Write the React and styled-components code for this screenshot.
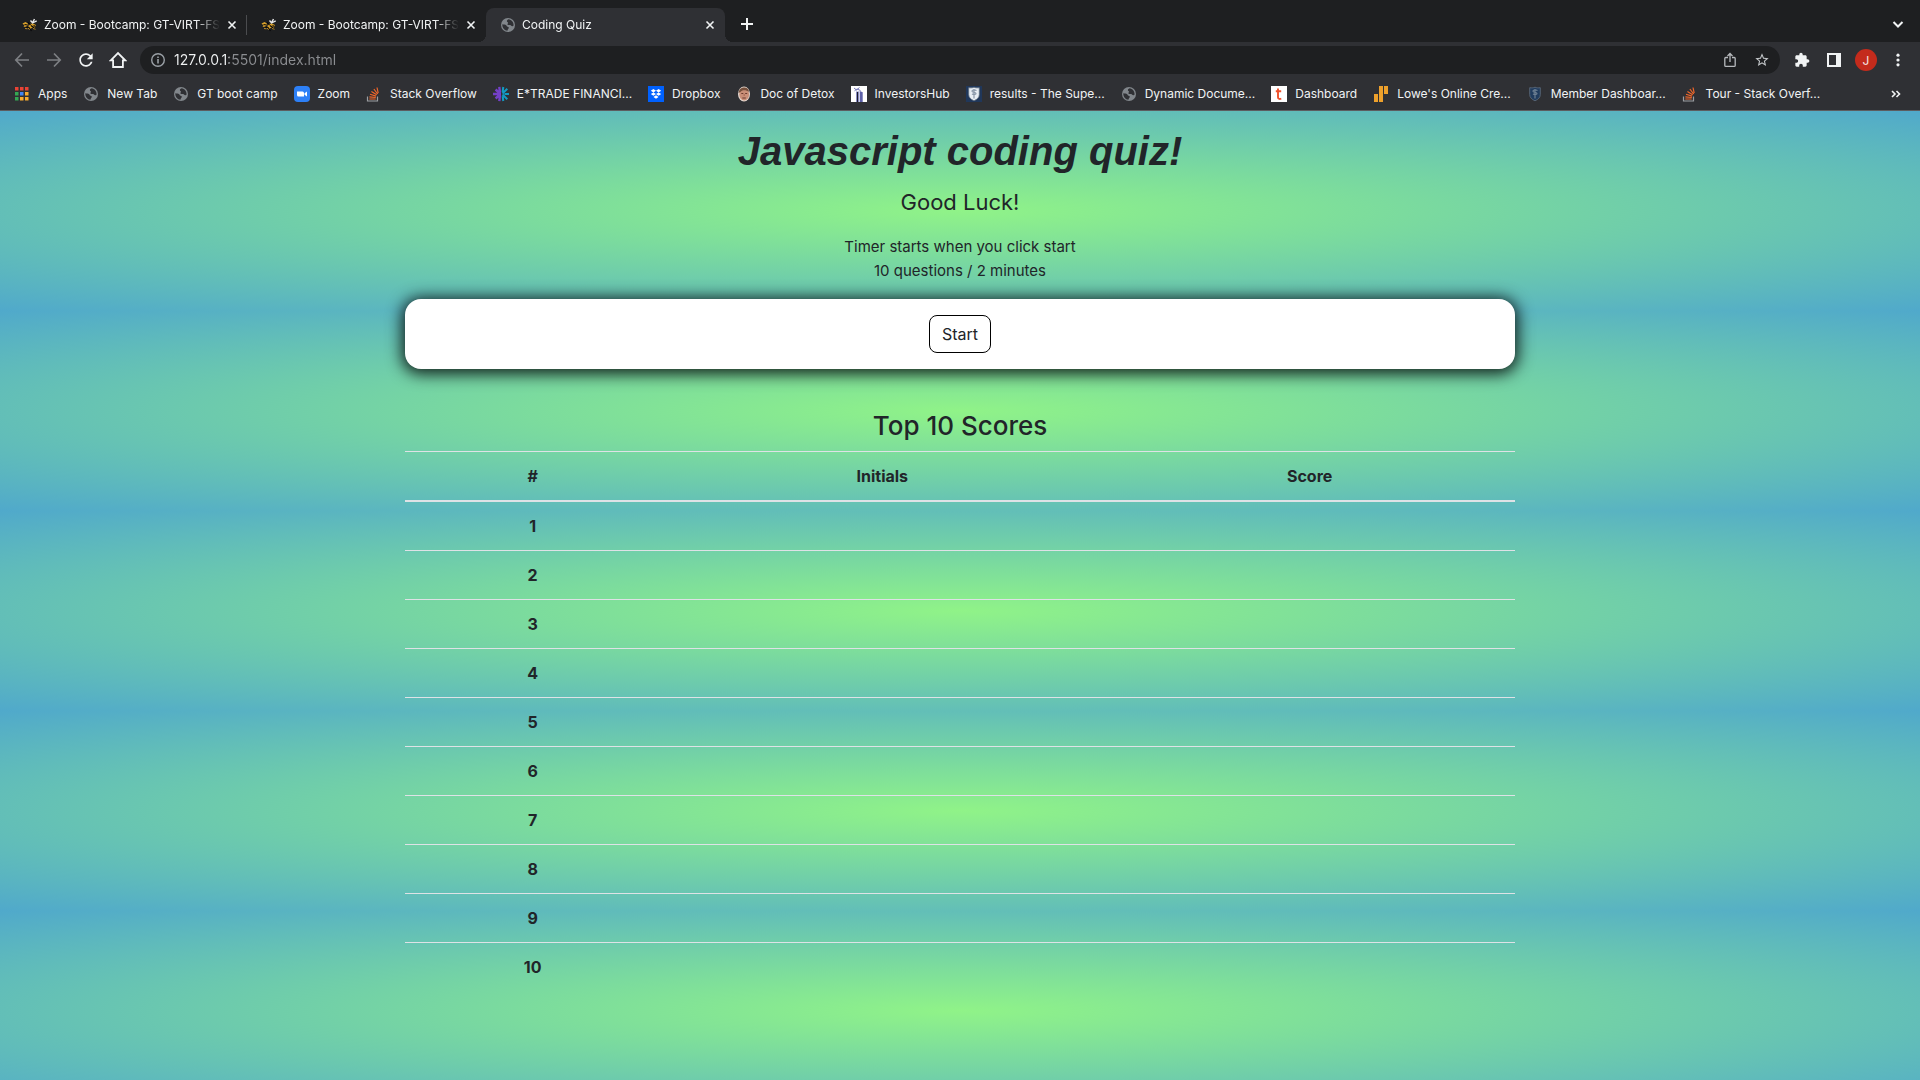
import React from "react";
import styled, { createGlobalStyle } from "styled-components";

const uiFont = `Inter, "Liberation Sans", sans-serif`;

const GlobalStyle = createGlobalStyle`
  *, *::before, *::after { box-sizing: border-box; }
  body { margin: 0; font-family: ${uiFont}; color: #212529; background: #1e1f21; }
  button { font: inherit; color: inherit; }
`;

const Screen = styled.div`
  min-height: 100vh;
  display: flex;
  flex-direction: column;
`;

const Chrome = styled.header`
  background: #2f3034;
  color: #f1f3f4;
  border-bottom: 1px solid #5c5d60;
  font-size: 12px;
`;

/* ---------- tab strip ---------- */

const TabStrip = styled.div`
  display: flex;
  height: 42px;
  padding: 8px 10px 0 8px;
  background: #1e1f21;
`;

const Tab = styled.div`
  position: relative;
  display: flex;
  align-items: center;
  width: 239px;
  height: 34px;
  padding: 0 9px 0 14px;
  gap: 6px;
  border-radius: 8px 8px 0 0;
  background: ${(p) => (p.$active ? "#2f3034" : "transparent")};

  ${(p) =>
    p.$active &&
    `&::before, &::after {
      content: "";
      position: absolute;
      bottom: 0;
      width: 8px;
      height: 8px;
    }
    &::before { right: 100%; background: radial-gradient(circle at 0 0, transparent 8px, #2f3034 8px); }
    &::after { left: 100%; background: radial-gradient(circle at 100% 0, transparent 8px, #2f3034 8px); }`}
`;

const TabDivider = styled.span`
  position: absolute;
  right: 0;
  top: 7px;
  width: 1px;
  height: 20px;
  background: #4b4c4f;
`;

const TabTitle = styled.span`
  flex: 1;
  min-width: 0;
  overflow: hidden;
  white-space: nowrap;
  line-height: 16px;
  mask-image: linear-gradient(to right, #000 calc(100% - 24px), transparent 100%);
`;

const IconButton = styled.button`
  display: grid;
  place-items: center;
  place-content: center;
  flex: none;
  width: ${(p) => p.$size || 32}px;
  height: ${(p) => p.$size || 32}px;
  padding: 0;
  border: 0;
  background: none;
  color: ${(p) => p.$color || "#f1f3f4"};
`;

const NewTab = styled(IconButton)`
  margin-left: 6px;
`;

const TabSearch = styled(IconButton)`
  margin-left: auto;
  width: 24px;
`;

/* ---------- toolbar ---------- */

const Toolbar = styled.div`
  display: flex;
  align-items: center;
  height: 36px;
  padding: 0 6px;
`;

const AddressBar = styled.div`
  flex: 1;
  display: flex;
  align-items: center;
  height: 28px;
  margin: 0 6px;
  padding: 0 2px 0 10px;
  border-radius: 14px;
  background: #1e1f21;
`;

const AddressInput = styled.input`
  flex: 1;
  min-width: 0;
  height: 28px;
  margin-left: 8px;
  padding: 0;
  border: 0;
  outline: 0;
  font: 14px/28px ${uiFont};
  color: #f1f3f4;
  -webkit-text-fill-color: transparent;
  background: linear-gradient(to right, #f1f3f4 55px, #8b8d91 55px);
  background-clip: text;
  -webkit-background-clip: text;
`;

const Avatar = styled.span`
  display: grid;
  place-items: center;
  width: 22px;
  height: 22px;
  border-radius: 50%;
  background: #c42b1c;
  color: #f6e3e0;
  font-size: 12px;
`;

/* ---------- bookmarks ---------- */

const Bookmarks = styled.nav`
  display: flex;
  align-items: center;
  height: 32px;
  padding: 0 12px 0 14px;
  gap: 16px;
`;

const Bookmark = styled.a`
  display: flex;
  align-items: center;
  gap: 8px;
  color: inherit;
  text-decoration: none;
  white-space: nowrap;
  line-height: 16px;
`;

const MoreBookmarks = styled(IconButton)`
  margin-left: auto;
`;

/* ---------- quiz page ---------- */

const Site = styled.main`
  flex: 1;
  padding: 16px 0 40px;
  text-align: center;
  background: radial-gradient(#90f388, #50a9cb) 0 0 / 100% 200px repeat;
`;

const Container = styled.div`
  max-width: 1140px;
  margin: 0 auto;
  padding: 0 15px;
  font-size: 16px;
  line-height: 24px;
`;

const Title = styled.h1`
  margin: 0 0 8px;
  font: italic bold 40px/48px "Liberation Sans", Arial, sans-serif;
`;

const Lead = styled.p`
  margin: 0 0 14px;
  font-size: 22px;
  line-height: 38px;
`;

const Note = styled.p`
  margin: 0 0 16px;
  font-size: 15px;
`;

const Card = styled.section`
  padding: 16px;
  border-radius: 16px;
  background: #fff;
  box-shadow: 0 2px 16px 3px rgba(0, 0, 0, 0.85);
  display: flex;
  justify-content: center;
`;

const StartButton = styled.button`
  height: 38px;
  padding: 0 12px;
  border: 1px solid #000;
  border-radius: 8px;
  background: #fff;
`;

const ScoresTitle = styled.h2`
  margin: 40px 0 8px;
  font-size: 26px;
  line-height: 34px;
  font-weight: 500;
`;

const Scores = styled.table`
  width: 100%;
  border-spacing: 0;

  th, td { padding: 12px; }
  th { font-weight: 700; }
  thead th { border-top: 1px solid #dee2e6; border-bottom: 2px solid #dee2e6; }
  thead th:nth-child(1) { width: 23%; }
  thead th:nth-child(2) { width: 40%; }
  tbody tr + tr > * { border-top: 1px solid #dee2e6; }
`;

/* ---------- icons ---------- */

const Svg = ({ s = 16, v = "0 0 24 24", children }) => (
  <svg width={s} height={s} viewBox={v} fill="currentColor" aria-hidden="true">
    {children}
  </svg>
);

const Close = () => (
  <Svg s={16} v="0 0 16 16">
    <path d="M4.5 4.5l7 7m0-7l-7 7" stroke="currentColor" strokeWidth="1.6" />
  </Svg>
);
const Plus = () => (
  <Svg s={16} v="0 0 16 16">
    <path d="M8 2v12M2 8h12" stroke="currentColor" strokeWidth="2" />
  </Svg>
);
const Chevron = () => (
  <Svg s={16} v="0 0 16 16">
    <path d="M3.5 6L8 10.5 12.5 6" fill="none" stroke="currentColor" strokeWidth="2" />
  </Svg>
);
const Back = () => (
  <Svg s={16} v="0 0 16 16">
    <path d="M15 8H2.5M8 1.5L1.8 8 8 14.5" fill="none" stroke="currentColor" strokeWidth="1.7" />
  </Svg>
);
const Forward = () => (
  <Svg s={16} v="0 0 16 16">
    <path d="M1 8h12.5M8 1.5L14.2 8 8 14.5" fill="none" stroke="currentColor" strokeWidth="1.7" />
  </Svg>
);
const Reload = () => (
  <Svg s={20}>
    <path d="M17.65 6.35C16.2 4.9 14.21 4 12 4c-4.42 0-7.99 3.58-7.99 8s3.57 8 7.99 8c3.73 0 6.84-2.55 7.73-6h-2.08c-.82 2.33-3.04 4-5.65 4-3.31 0-6-2.69-6-6s2.69-6 6-6c1.66 0 3.14.69 4.22 1.78L13 11h7V4l-2.35 2.35z" />
  </Svg>
);
const Home = () => (
  <Svg s={18} v="0 0 18 18">
    <path d="M1.8 9.3L9 2l7.2 7.3H13.9V16H4.1V9.3z" fill="none" stroke="currentColor" strokeWidth="1.8" />
  </Svg>
);
const Info = () => (
  <Svg s={16} v="0 0 16 16">
    <circle cx="8" cy="8" r="6.3" fill="none" stroke="#9aa0a6" strokeWidth="1.4" />
    <path d="M7.2 7h1.6v4.4H7.2zM7.2 4.4h1.6V6H7.2z" fill="#9aa0a6" />
  </Svg>
);
const Share = () => (
  <Svg s={16} v="0 0 16 16">
    <path d="M6 5.5H3.8a1 1 0 0 0-1 1v6.9a1 1 0 0 0 1 1h8.4a1 1 0 0 0 1-1V6.5a1 1 0 0 0-1-1H10M8 10V1.5M5.5 4L8 1.5 10.5 4" fill="none" stroke="currentColor" strokeWidth="1.3" />
  </Svg>
);
const Star = () => (
  <Svg s={16}>
    <path d="M22 9.24l-7.19-.62L12 2 9.19 8.63 2 9.24l5.46 4.73L5.82 21 12 17.27 18.18 21l-1.63-7.03L22 9.24zM12 15.4l-3.76 2.27 1-4.28-3.32-2.88 4.38-.38L12 6.1l1.71 4.04 4.38.38-3.32 2.88 1 4.28L12 15.4z" />
  </Svg>
);
const Puzzle = () => (
  <Svg s={16}>
    <path d="M20.5 11H19V7c0-1.1-.9-2-2-2h-4V3.5C13 2.12 11.88 1 10.5 1S8 2.12 8 3.5V5H4c-1.1 0-1.99.9-1.99 2v3.8H3.5c1.49 0 2.7 1.21 2.7 2.7s-1.21 2.7-2.7 2.7H2V20c0 1.1.9 2 2 2h3.8v-1.5c0-1.49 1.21-2.7 2.7-2.7 1.49 0 2.7 1.21 2.7 2.7V22H17c1.1 0 2-.9 2-2v-4h1.5c1.38 0 2.5-1.12 2.5-2.5S21.88 11 20.5 11z" />
  </Svg>
);
const SidePanel = () => (
  <Svg s={14} v="0 0 14 14">
    <path d="M0 0h14v14H0zM2 2v10h7V2z" fillRule="evenodd" />
  </Svg>
);
const Dots = () => (
  <Svg s={16} v="0 0 16 16">
    <circle cx="8" cy="3.2" r="1.6" />
    <circle cx="8" cy="8" r="1.6" />
    <circle cx="8" cy="12.8" r="1.6" />
  </Svg>
);
const More = () => (
  <Svg s={12} v="0 0 12 12">
    <path d="M2 3l3 3-3 3M6.5 3l3 3-3 3" fill="none" stroke="currentColor" strokeWidth="1.6" />
  </Svg>
);

const Globe = () => (
  <Svg v="0 0 16 16">
    <circle cx="8" cy="8" r="7" fill="#81868b" />
    <path d="M2.3 7.2c1.6.2 3 .2 3.9 1 .7.6.5 1.4 1.4 1.6.9.1 1.3.5 1.2 1.3-.2 1-1 1.1-1.4 2.6-2.9-.2-5.3-2.900-5.1-6.5z" fill="#2f3034" />
    <path d="M8.500 2.3c-.8.5-1.7 1-1.6 1.9.1.8 1 .8 1.1 1.6.1.8-.9.9-.6 1.7.3.7 1.6.3 2.6.4 1.2.1 1.3 1.2 2.2 1.3.6.1 1-.2 1.4-.7.1-3.3-2-5.8-5.1-6.2z" fill="#2f3034" />
  </Svg>
);
const Bee = () => (
  <Svg v="0 0 16 16">
    <path d="M.5 6.500l3-1.500 2.500 1.5-1 3-3.500.5 1-1.500z" fill="#d9a12b" />
    <path d="M7 7l4-.5 3 1.500-1 2.500-3.500.5-2 2-1.500-1.500z" fill="#d9a12b" />
    <path d="M2.500 7.500l3 .5M4 10l3 .5 2.500 3.500M9 8.500l2.500 2 1 2M6 5.500l2.500 2.500M11.500 8.500l2 1" fill="none" stroke="#08080a" strokeWidth="1.2" />
    <path d="M8.500 3.500l2 2.200L12.500 2M10.500 6l4.200-2.200" fill="none" stroke="#e8e8e8" strokeWidth="1.4" />
    <path d="M3 11.500l2.500.3M11 11.500l2.500.8" stroke="#b98a2a" />
  </Svg>
);
const appColors = ["#ea4335", "#ea4335", "#ea4335", "#34a853", "#4285f4", "#f9ab2e", "#34a853", "#f9ab2e", "#f9ab2e"];
const Apps = () => (
  <Svg v="0 0 16 16">
    {appColors.map((c, i) => (
      <rect key={i} x={1 + (i % 3) * 5} y={1 + Math.floor(i / 3) * 5} width="3.5" height="3.5" fill={c} />
    ))}
  </Svg>
);
const ZoomLogo = () => (
  <Svg v="0 0 16 16">
    <rect width="16" height="16" rx="4" fill="#2d80f7" />
    <path d="M3 5.5h5.5A1.5 1.5 0 0 1 10 7v3.500H4.500A1.500 1.500 0 0 1 3 9zM10.500 7.200L13 5.500v5l-2.500-1.700z" fill="#fff" />
  </Svg>
);
const Stack = () => (
  <Svg v="0 0 16 16">
    <path d="M1.500 10.500v4.500h10v-4.500" fill="none" stroke="#9b9da1" strokeWidth="1.200" />
    <path d="M3.300 13h6.400M3.400 10.800l6.400.7M4 8.200l6.100 1.900M5.400 5.400l5.300 3.400M7.900 3l3.700 5M11 1.500l1.200 5.700" stroke="#f2672a" strokeWidth="1.200" />
  </Svg>
);
const Etrade = () => (
  <Svg v="0 0 16 16">
    <path d="M0 8h8M2.600 3.500L7 7.500M2.600 12.500L7 8.500M6.300 .8L7 7M6.300 15.200L7 9" stroke="#7440c8" strokeWidth="2.400" fill="none" />
    <path d="M16 8h-4.500M14.300 2.800L9.500 7.500M14.300 13.200L9.500 8.500M10.300 1L9.600 6M10.300 15L9.600 10" stroke="#129bc4" strokeWidth="2" fill="none" />
  </Svg>
);
const Dropbox = () => (
  <Svg v="0 0 16 16">
    <rect width="16" height="16" fill="#0061fe" />
    <path d="M5.400 3L8 4.700 5.400 6.400 2.800 4.700zM10.600 3l2.600 1.700-2.600 1.700L8 4.700zM5.400 6.400L8 8.100 5.400 9.800 2.800 8.100zM10.600 6.400l2.600 1.700-2.600 1.700L8 8.100zM8 9.300l2.500 1.700L8 12.700 5.500 11z" fill="#fff" />
  </Svg>
);
const Face = () => (
  <Svg v="0 0 16 16">
    <ellipse cx="8" cy="8" rx="6" ry="7.500" fill="#e5d8d0" />
    <ellipse cx="8.200" cy="8.600" rx="4.900" ry="6" fill="#c98f78" />
    <path d="M2.600 7C3 2.500 6 1.200 9 1.500c2.500.3 4 2.500 4.200 4.500C10 3.500 6 3.500 4.500 6z" fill="#76503c" />
    <path d="M5.300 7.500h2M9.200 7.500h2M6.300 12h3.500" stroke="#6b3b2e" />
    <path d="M8.200 8v2" stroke="#a86854" />
  </Svg>
);
const Investors = () => (
  <Svg v="0 0 16 16">
    <rect width="16" height="16" fill="#fff" />
    <path d="M3 2l2.500 2L8.500 1.500M3.500 4.800L6 3l3.500 1.500" stroke="#7577b8" fill="none" />
    <path d="M5 5.500h3V16H5z" fill="#8a8dc4" />
    <path d="M6.500 6v10" stroke="#1c1c2c" />
    <path d="M8.700 5l3 1.200V16h-3z" fill="#5d60a8" />
  </Svg>
);
const Shield = ({ bg, fill, mark }) => (
  <Svg v="0 0 16 16">
    <rect width="16" height="16" fill={bg} />
    <path d="M8 1.200c1.500.7 3.200.8 5.300.5v6.800c0 3-2 4.800-5.300 6.300-3.300-1.500-5.300-3.300-5.300-6.300V1.700c2.100.3 3.800.2 5.300-.5z" fill={fill} stroke="#5f6f80" strokeWidth=".8" />
    <path d="M10.500 4.500C8 3.500 6 4 6 5.200c0 1.500 4 .8 4 2.300 0 1-2 1.500-4 .5M8 3v9.500" fill="none" stroke={mark} strokeWidth="1.200" />
  </Svg>
);
const Toast = () => (
  <Svg v="0 0 16 16">
    <rect width="16" height="16" fill="#fff" />
    <path d="M7 2.500v8.800c0 1.400 1.200 2 3.300 1.400M4.800 5.300h5.400" fill="none" stroke="#f0522d" strokeWidth="1.900" />
  </Svg>
);
const Bars = () => (
  <Svg v="0 0 16 16">
    <path d="M1 8h4v8H1zM6 0h4v16H6zM11 0h4v8h-4z" fill="#eda02c" />
  </Svg>
);

/* ---------- data ---------- */

const tabs = [
  { title: "Zoom - Bootcamp: GT-VIRT-FS", icon: <Bee />, divider: true },
  { title: "Zoom - Bootcamp: GT-VIRT-FS", icon: <Bee /> },
  { title: "Coding Quiz", icon: <Globe />, active: true },
];

const bookmarks = [
  ["Apps", <Apps />],
  ["New Tab", <Globe />],
  ["GT boot camp", <Globe />],
  ["Zoom", <ZoomLogo />],
  ["Stack Overflow", <Stack />],
  ["E*TRADE FINANCI...", <Etrade />],
  ["Dropbox", <Dropbox />],
  ["Doc of Detox", <Face />],
  ["InvestorsHub", <Investors />],
  ["results - The Supe...", <Shield bg="#20375a" fill="#e8edf2" mark="#8a97a8" />],
  ["Dynamic Docume...", <Globe />],
  ["Dashboard", <Toast />],
  ["Lowe's Online Cre...", <Bars />],
  ["Member Dashboar...", <Shield bg="none" fill="#213c5e" mark="#6d7f92" />],
  ["Tour - Stack Overf...", <Stack />],
];

const ranks = Array.from({ length: 10 }, (_, i) => i + 1);

export default function App() {
  return (
    <Screen>
      <GlobalStyle />
      <Chrome>
        <TabStrip>
          {tabs.map((t, i) => (
            <Tab key={i} $active={t.active}>
              {t.icon}
              <TabTitle>{t.title}</TabTitle>
              <IconButton $size={12} aria-label="Close tab"><Close /></IconButton>
              {t.divider && <TabDivider />}
            </Tab>
          ))}
          <NewTab aria-label="New tab"><Plus /></NewTab>
          <TabSearch aria-label="Search tabs"><Chevron /></TabSearch>
        </TabStrip>
        <Toolbar>
          <IconButton $color="#7d7f83" aria-label="Back"><Back /></IconButton>
          <IconButton $color="#7d7f83" aria-label="Forward"><Forward /></IconButton>
          <IconButton aria-label="Reload"><Reload /></IconButton>
          <IconButton aria-label="Home"><Home /></IconButton>
          <AddressBar>
            <Info />
            <AddressInput aria-label="Address" defaultValue="127.0.0.1:5501/index.html" />
            <IconButton $color="#b6b9bd" aria-label="Share"><Share /></IconButton>
            <IconButton $color="#c4c7ca" aria-label="Bookmark this page"><Star /></IconButton>
          </AddressBar>
          <IconButton aria-label="Extensions"><Puzzle /></IconButton>
          <IconButton aria-label="Side panel"><SidePanel /></IconButton>
          <IconButton aria-label="Profile"><Avatar>J</Avatar></IconButton>
          <IconButton aria-label="Menu"><Dots /></IconButton>
        </Toolbar>
        <Bookmarks aria-label="Bookmarks">
          {bookmarks.map(([label, icon]) => (
            <Bookmark key={label} href="#">
              {icon}
              <span>{label}</span>
            </Bookmark>
          ))}
          <MoreBookmarks $size={24} aria-label="More bookmarks"><More /></MoreBookmarks>
        </Bookmarks>
      </Chrome>
      <Site>
        <Container>
          <Title>Javascript coding quiz!</Title>
          <Lead>Good Luck!</Lead>
          <Note>
            Timer starts when you click start
            <br />
            10 questions / 2 minutes
          </Note>
          <Card>
            <StartButton>Start</StartButton>
          </Card>
          <ScoresTitle>Top 10 Scores</ScoresTitle>
          <Scores>
            <thead>
              <tr>
                <th scope="col">#</th>
                <th scope="col">Initials</th>
                <th scope="col">Score</th>
              </tr>
            </thead>
            <tbody>
              {ranks.map((n) => (
                <tr key={n}>
                  <th scope="row">{n}</th>
                  <td />
                  <td />
                </tr>
              ))}
            </tbody>
          </Scores>
        </Container>
      </Site>
    </Screen>
  );
}
